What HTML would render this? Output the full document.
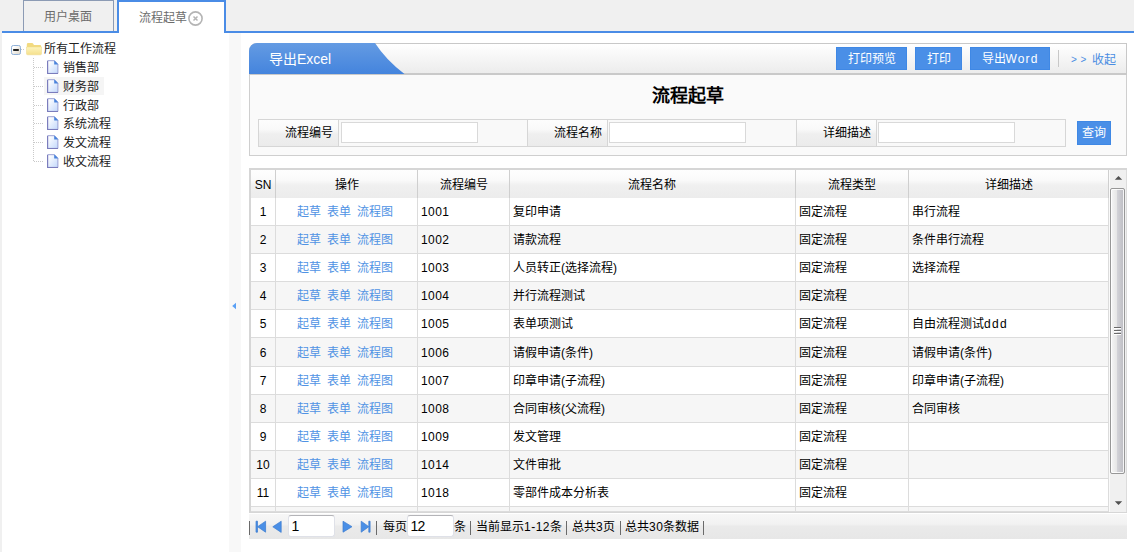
<!DOCTYPE html><html lang="zh-CN"><head><meta charset="utf-8"><title>流程起草</title><style>
*{box-sizing:border-box;margin:0;padding:0}
html,body{width:1134px;height:552px;overflow:hidden;background:#fff}
body{font-family:"Liberation Sans",sans-serif;font-size:12px;color:#000;position:relative}
.a{position:absolute}
input,button{font-family:inherit;color:inherit;outline:none;margin:0;-webkit-appearance:none;appearance:none;border-radius:0}
button{padding:0;cursor:pointer}
a{text-decoration:none;cursor:pointer}
.t{position:absolute;white-space:nowrap;line-height:16px;height:16px}
#tabbar{left:0;top:0;width:1134px;height:33px;background:#f0f0f0}
#blueline{left:2px;top:31px;width:1132px;height:2px;background:#4a8ce6}
#tab1{left:23px;top:0;width:91px;height:31px;border:1px solid #8c9bb4;border-bottom:none;background:#f0f0f0}
#tab2{left:117px;top:0;width:109px;height:33px;border:2px solid #4a8ce6;border-bottom:none;background:#fff}
#leftedge{left:0;top:33px;width:2px;height:519px;background:#f0f0f0}
#split{left:229px;top:33px;width:12px;height:519px;background:#f8f8f8}
.dotv{width:1px;background:repeating-linear-gradient(180deg,#c9c9c9 0 1px,transparent 1px 2px)}
.doth{height:1px;background:repeating-linear-gradient(90deg,#c9c9c9 0 1px,transparent 1px 2px)}
#hdr{left:249px;top:43px;width:878px;height:32px;border:1px solid #c8c8c8;border-bottom:2px solid #c9c9c9;border-radius:8px 0 0 0;background:linear-gradient(#ffffff,#ececec);overflow:hidden}
.btn{position:absolute;top:47px;height:23px;background:#4a8fe7;border:1px solid #3f88e5;color:#fff;text-align:center;line-height:22px;font-size:12px;white-space:nowrap}
#form{left:249px;top:75px;width:878px;height:81px;border:1px solid #cfcfcf;border-top:none;background:#fafafa}
.lab{position:absolute;z-index:2;top:119px;height:28px;width:81px;border:1px solid #d6d6d6;background:linear-gradient(#fdfdfd 0%,#f9f9f9 36%,#efefef 54%,#ebebeb 100%);text-align:right;padding-right:5px;line-height:26px;white-space:nowrap}
.inc{position:absolute;top:119px;height:28px;border:1px solid #d6d6d6;border-left:none;background:#f9f9f9}
.inp{position:absolute;top:122px;height:21px;width:137px;border:1px solid #d9d9d9;background:#fff;font-size:12px;padding:0 2px}
#grid{left:249px;top:169px;width:861px;height:343px;background:#fff;overflow:hidden}
.hc{position:absolute;top:170px;height:28px;background:linear-gradient(#fefefe 0%,#fafafa 36%,#f0f0f0 54%,#ececec 100%);border-right:1px solid #cfcfcf;text-align:center;line-height:30px;white-space:nowrap}
.c{position:absolute;border-right:1px solid #dcdcdc;border-bottom:1px solid #dcdcdc;white-space:nowrap;overflow:hidden;padding-left:3px}
.lk{color:#5093e4}
#pager{left:249px;top:514px;width:878px;height:25px;background:linear-gradient(#f7f7f7 0%,#f2f2f2 40%,#eaeaea 50%,#e7e7e7 100%)}
.pin{position:absolute;top:515px;height:22px;width:47px;border:1px solid #dfe1e8;border-top-color:#b4b4b8;border-radius:3px;background:#fff;font-size:14px;line-height:21px;padding-left:2.5px;letter-spacing:-0.9px}
</style></head><body>
<svg width="0" height="0" style="position:absolute"><defs><linearGradient id="dg" x1="0" y1="0" x2="1" y2="1"><stop offset="0.1" stop-color="#ffffff"/><stop offset="1" stop-color="#c2d8fb"/></linearGradient><linearGradient id="fg" x1="0" y1="0" x2="0" y2="1"><stop offset="0" stop-color="#fdf4be"/><stop offset="1" stop-color="#f5e08c"/></linearGradient><linearGradient id="eg" x1="0" y1="0" x2="1" y2="1"><stop offset="0.2" stop-color="#ffffff"/><stop offset="1" stop-color="#ddd6c8"/></linearGradient></defs></svg>
<div class="a" id="tabbar"></div><div class="a" id="blueline"></div>
<div class="a" id="tab1"></div><div class="a" id="tab2"></div>
<div class="t" style="left:44px;top:9px;color:#6c6c6c">用户桌面</div>
<div class="t" style="left:139px;top:10px;color:#6c6c6c">流程起草</div>
<svg class="a" style="left:187px;top:10px" width="17" height="17" viewBox="0 0 17 17"><circle cx="8.5" cy="8.5" r="6.6" fill="#fff" stroke="#b4b4b4" stroke-width="1.6"/><path d="M6.5 6.5 L10.5 10.5 M10.5 6.5 L6.5 10.5" stroke="#b4b4b4" stroke-width="1.5"/></svg>
<div class="a" id="leftedge"></div><div class="a" id="split"></div>
<svg class="a" style="left:231px;top:301px" width="7" height="10" viewBox="0 0 7 10"><path d="M1.2 5 L5 1.7 L5 8.3 Z" fill="#5aa0f5"/></svg>
<div class="a" style="left:44px;top:77px;width:60px;height:18px;background:#f5f5f5"></div>
<div class="a dotv" style="left:33px;top:58px;height:104px"></div>
<div class="a doth" style="left:21px;top:49px;width:4px"></div>
<svg class="a" style="left:11px;top:45px" width="10" height="10" viewBox="0 0 10 10"><rect x="0.5" y="0.5" width="9" height="9" rx="1.8" fill="url(#eg)" stroke="#8fb0d8"/><rect x="2.2" y="4" width="5.6" height="2" fill="#222"/></svg>
<svg class="a" style="left:26px;top:42px" width="16" height="14" viewBox="0 0 16 14"><path d="M0.8 2.4 Q0.8 1 2.2 1 L6 1 Q6.9 1 7.3 1.8 L7.9 3 L14 3 Q15.2 3 15.2 4.2 L15.2 6 L0.8 6 Z" fill="#f2da80"/><path d="M0.5 5 L15.5 5 L15.5 11.6 Q15.5 12.8 14.3 12.8 L1.7 12.8 Q0.5 12.8 0.5 11.6 Z" fill="url(#fg)" stroke="#eed987" stroke-width="0.5"/></svg>
<div class="t" style="left:44px;top:41px;color:#222">所有工作流程</div>
<div class="a doth" style="left:34px;top:67px;width:9px"></div>
<svg class="a" style="left:47px;top:60px" width="12" height="15" viewBox="0 0 12 15"><path d="M0.6 0.7 L7.4 0.7 L10.9 4.2 L10.9 13.4 L0.6 13.4 Z" fill="url(#dg)" stroke="#9aa0d4" stroke-width="1"/><path d="M0.6 1 L0.6 13.5 L11 13.5" fill="none" stroke="#7a7cbc" stroke-width="1.1"/><path d="M7.2 0.3 L11.3 4.4 L7.2 4.4 Z" fill="#4a84dc"/></svg>
<div class="t" style="left:63px;top:60px;color:#222">销售部</div>
<div class="a doth" style="left:34px;top:86px;width:9px"></div>
<svg class="a" style="left:47px;top:79px" width="12" height="15" viewBox="0 0 12 15"><path d="M0.6 0.7 L7.4 0.7 L10.9 4.2 L10.9 13.4 L0.6 13.4 Z" fill="url(#dg)" stroke="#9aa0d4" stroke-width="1"/><path d="M0.6 1 L0.6 13.5 L11 13.5" fill="none" stroke="#7a7cbc" stroke-width="1.1"/><path d="M7.2 0.3 L11.3 4.4 L7.2 4.4 Z" fill="#4a84dc"/></svg>
<div class="t" style="left:63px;top:79px;color:#222">财务部</div>
<div class="a doth" style="left:34px;top:105px;width:9px"></div>
<svg class="a" style="left:47px;top:98px" width="12" height="15" viewBox="0 0 12 15"><path d="M0.6 0.7 L7.4 0.7 L10.9 4.2 L10.9 13.4 L0.6 13.4 Z" fill="url(#dg)" stroke="#9aa0d4" stroke-width="1"/><path d="M0.6 1 L0.6 13.5 L11 13.5" fill="none" stroke="#7a7cbc" stroke-width="1.1"/><path d="M7.2 0.3 L11.3 4.4 L7.2 4.4 Z" fill="#4a84dc"/></svg>
<div class="t" style="left:63px;top:98px;color:#222">行政部</div>
<div class="a doth" style="left:34px;top:123px;width:9px"></div>
<svg class="a" style="left:47px;top:116px" width="12" height="15" viewBox="0 0 12 15"><path d="M0.6 0.7 L7.4 0.7 L10.9 4.2 L10.9 13.4 L0.6 13.4 Z" fill="url(#dg)" stroke="#9aa0d4" stroke-width="1"/><path d="M0.6 1 L0.6 13.5 L11 13.5" fill="none" stroke="#7a7cbc" stroke-width="1.1"/><path d="M7.2 0.3 L11.3 4.4 L7.2 4.4 Z" fill="#4a84dc"/></svg>
<div class="t" style="left:63px;top:116px;color:#222">系统流程</div>
<div class="a doth" style="left:34px;top:142px;width:9px"></div>
<svg class="a" style="left:47px;top:135px" width="12" height="15" viewBox="0 0 12 15"><path d="M0.6 0.7 L7.4 0.7 L10.9 4.2 L10.9 13.4 L0.6 13.4 Z" fill="url(#dg)" stroke="#9aa0d4" stroke-width="1"/><path d="M0.6 1 L0.6 13.5 L11 13.5" fill="none" stroke="#7a7cbc" stroke-width="1.1"/><path d="M7.2 0.3 L11.3 4.4 L7.2 4.4 Z" fill="#4a84dc"/></svg>
<div class="t" style="left:63px;top:135px;color:#222">发文流程</div>
<div class="a doth" style="left:34px;top:161px;width:9px"></div>
<svg class="a" style="left:47px;top:154px" width="12" height="15" viewBox="0 0 12 15"><path d="M0.6 0.7 L7.4 0.7 L10.9 4.2 L10.9 13.4 L0.6 13.4 Z" fill="url(#dg)" stroke="#9aa0d4" stroke-width="1"/><path d="M0.6 1 L0.6 13.5 L11 13.5" fill="none" stroke="#7a7cbc" stroke-width="1.1"/><path d="M7.2 0.3 L11.3 4.4 L7.2 4.4 Z" fill="#4a84dc"/></svg>
<div class="t" style="left:63px;top:154px;color:#222">收文流程</div>
<div class="a" id="hdr"></div><svg class="a" style="left:249px;top:43px" width="160" height="31" viewBox="0 0 160 31"><defs><linearGradient id="bg" x1="0" y1="0" x2="0" y2="1"><stop offset="0" stop-color="#649be3"/><stop offset="1" stop-color="#4484dd"/></linearGradient></defs><path d="M0 31 L0 8 A8 8 0 0 1 8 0 L126 0 Q137 17 155.5 31 Z" fill="url(#bg)"/></svg>
<div class="t" style="left:269px;top:50px;color:#fff;font-size:14px;line-height:18px;height:18px">导出Excel</div>
<button class="btn" style="left:836px;width:71px">打印预览</button>
<button class="btn" style="left:915px;width:47px">打印</button>
<button class="btn" style="left:970px;width:80px">导出<span style="letter-spacing:1.1px">Word</span></button>
<div class="a" style="left:1058px;top:50px;width:1px;height:17px;background:#c8c8c8"></div>
<div class="t" style="left:1071px;top:52px;color:#4a8de2;font-size:10px">&gt;</div><div class="t" style="left:1080.5px;top:52px;color:#4a8de2;font-size:10px">&gt;</div><div class="t" style="left:1092px;top:52px;color:#4a8de2">收起</div>
<div class="a" id="form"></div>
<div class="t" style="left:652px;top:84px;font-size:18px;font-weight:bold;line-height:24px;height:24px;color:#000">流程起草</div>
<div class="lab" style="left:258px">流程编号</div>
<div class="inc" style="left:339px;width:189px"></div>
<input class="inp" type="text" style="left:341px">
<div class="lab" style="left:527px">流程名称</div>
<div class="inc" style="left:608px;width:189px"></div>
<input class="inp" type="text" style="left:609px">
<div class="lab" style="left:796px">详细描述</div>
<div class="inc" style="left:877px;width:189px"></div>
<input class="inp" type="text" style="left:878px">
<button class="btn" style="left:1077px;top:121px;width:34px;height:24px;line-height:22px">查询</button>
<div class="a" style="left:249px;top:168px;width:878px;height:345px;background:#d6d6d6"></div>
<div class="a" style="left:251px;top:170px;width:858px;height:342px;background:#fff"></div>
<div class="hc" style="left:251px;width:25px">SN</div>
<div class="hc" style="left:276px;width:142px">操作</div>
<div class="hc" style="left:418px;width:92px">流程编号</div>
<div class="hc" style="left:510px;width:286px;padding-right:2px">流程名称</div>
<div class="hc" style="left:796px;width:113px">流程类型</div>
<div class="hc" style="left:909px;width:200px">详细描述</div>
<div class="c" style="left:251px;top:198px;width:25px;height:28px;line-height:29px;background:#fff;text-align:center;padding-left:0;">1</div>
<div class="c" style="left:276px;top:198px;width:142px;height:28px;line-height:29px;background:#fff;"><a class="lk a" style="left:21px">起草</a><a class="lk a" style="left:51px">表单</a><a class="lk a" style="left:81px">流程图</a></div>
<div class="c" style="left:418px;top:198px;width:92px;height:28px;line-height:29px;background:#fff;letter-spacing:0.4px;">1001</div>
<div class="c" style="left:510px;top:198px;width:286px;height:28px;line-height:29px;background:#fff;">复印申请</div>
<div class="c" style="left:796px;top:198px;width:113px;height:28px;line-height:29px;background:#fff;">固定流程</div>
<div class="c" style="left:909px;top:198px;width:200px;height:28px;line-height:29px;background:#fff;">串行流程</div>
<div class="c" style="left:251px;top:226px;width:25px;height:28px;line-height:29px;background:#f6f6f6;text-align:center;padding-left:0;">2</div>
<div class="c" style="left:276px;top:226px;width:142px;height:28px;line-height:29px;background:#f6f6f6;"><a class="lk a" style="left:21px">起草</a><a class="lk a" style="left:51px">表单</a><a class="lk a" style="left:81px">流程图</a></div>
<div class="c" style="left:418px;top:226px;width:92px;height:28px;line-height:29px;background:#f6f6f6;letter-spacing:0.4px;">1002</div>
<div class="c" style="left:510px;top:226px;width:286px;height:28px;line-height:29px;background:#f6f6f6;">请款流程</div>
<div class="c" style="left:796px;top:226px;width:113px;height:28px;line-height:29px;background:#f6f6f6;">固定流程</div>
<div class="c" style="left:909px;top:226px;width:200px;height:28px;line-height:29px;background:#f6f6f6;">条件串行流程</div>
<div class="c" style="left:251px;top:254px;width:25px;height:28px;line-height:29px;background:#fff;text-align:center;padding-left:0;">3</div>
<div class="c" style="left:276px;top:254px;width:142px;height:28px;line-height:29px;background:#fff;"><a class="lk a" style="left:21px">起草</a><a class="lk a" style="left:51px">表单</a><a class="lk a" style="left:81px">流程图</a></div>
<div class="c" style="left:418px;top:254px;width:92px;height:28px;line-height:29px;background:#fff;letter-spacing:0.4px;">1003</div>
<div class="c" style="left:510px;top:254px;width:286px;height:28px;line-height:29px;background:#fff;">人员转正(选择流程)</div>
<div class="c" style="left:796px;top:254px;width:113px;height:28px;line-height:29px;background:#fff;">固定流程</div>
<div class="c" style="left:909px;top:254px;width:200px;height:28px;line-height:29px;background:#fff;">选择流程</div>
<div class="c" style="left:251px;top:282px;width:25px;height:28px;line-height:29px;background:#f6f6f6;text-align:center;padding-left:0;">4</div>
<div class="c" style="left:276px;top:282px;width:142px;height:28px;line-height:29px;background:#f6f6f6;"><a class="lk a" style="left:21px">起草</a><a class="lk a" style="left:51px">表单</a><a class="lk a" style="left:81px">流程图</a></div>
<div class="c" style="left:418px;top:282px;width:92px;height:28px;line-height:29px;background:#f6f6f6;letter-spacing:0.4px;">1004</div>
<div class="c" style="left:510px;top:282px;width:286px;height:28px;line-height:29px;background:#f6f6f6;">并行流程测试</div>
<div class="c" style="left:796px;top:282px;width:113px;height:28px;line-height:29px;background:#f6f6f6;">固定流程</div>
<div class="c" style="left:909px;top:282px;width:200px;height:28px;line-height:29px;background:#f6f6f6;"></div>
<div class="c" style="left:251px;top:310px;width:25px;height:28px;line-height:29px;background:#fff;text-align:center;padding-left:0;">5</div>
<div class="c" style="left:276px;top:310px;width:142px;height:28px;line-height:29px;background:#fff;"><a class="lk a" style="left:21px">起草</a><a class="lk a" style="left:51px">表单</a><a class="lk a" style="left:81px">流程图</a></div>
<div class="c" style="left:418px;top:310px;width:92px;height:28px;line-height:29px;background:#fff;letter-spacing:0.4px;">1005</div>
<div class="c" style="left:510px;top:310px;width:286px;height:28px;line-height:29px;background:#fff;">表单项测试</div>
<div class="c" style="left:796px;top:310px;width:113px;height:28px;line-height:29px;background:#fff;">固定流程</div>
<div class="c" style="left:909px;top:310px;width:200px;height:28px;line-height:29px;background:#fff;">自由流程测试<span style="letter-spacing:1.3px">ddd</span></div>
<div class="c" style="left:251px;top:338px;width:25px;height:29px;line-height:30px;background:#f6f6f6;text-align:center;padding-left:0;">6</div>
<div class="c" style="left:276px;top:338px;width:142px;height:29px;line-height:30px;background:#f6f6f6;"><a class="lk a" style="left:21px">起草</a><a class="lk a" style="left:51px">表单</a><a class="lk a" style="left:81px">流程图</a></div>
<div class="c" style="left:418px;top:338px;width:92px;height:29px;line-height:30px;background:#f6f6f6;letter-spacing:0.4px;">1006</div>
<div class="c" style="left:510px;top:338px;width:286px;height:29px;line-height:30px;background:#f6f6f6;">请假申请(条件)</div>
<div class="c" style="left:796px;top:338px;width:113px;height:29px;line-height:30px;background:#f6f6f6;">固定流程</div>
<div class="c" style="left:909px;top:338px;width:200px;height:29px;line-height:30px;background:#f6f6f6;">请假申请(条件)</div>
<div class="c" style="left:251px;top:367px;width:25px;height:28px;line-height:29px;background:#fff;text-align:center;padding-left:0;">7</div>
<div class="c" style="left:276px;top:367px;width:142px;height:28px;line-height:29px;background:#fff;"><a class="lk a" style="left:21px">起草</a><a class="lk a" style="left:51px">表单</a><a class="lk a" style="left:81px">流程图</a></div>
<div class="c" style="left:418px;top:367px;width:92px;height:28px;line-height:29px;background:#fff;letter-spacing:0.4px;">1007</div>
<div class="c" style="left:510px;top:367px;width:286px;height:28px;line-height:29px;background:#fff;">印章申请(子流程)</div>
<div class="c" style="left:796px;top:367px;width:113px;height:28px;line-height:29px;background:#fff;">固定流程</div>
<div class="c" style="left:909px;top:367px;width:200px;height:28px;line-height:29px;background:#fff;">印章申请(子流程)</div>
<div class="c" style="left:251px;top:395px;width:25px;height:28px;line-height:29px;background:#f6f6f6;text-align:center;padding-left:0;">8</div>
<div class="c" style="left:276px;top:395px;width:142px;height:28px;line-height:29px;background:#f6f6f6;"><a class="lk a" style="left:21px">起草</a><a class="lk a" style="left:51px">表单</a><a class="lk a" style="left:81px">流程图</a></div>
<div class="c" style="left:418px;top:395px;width:92px;height:28px;line-height:29px;background:#f6f6f6;letter-spacing:0.4px;">1008</div>
<div class="c" style="left:510px;top:395px;width:286px;height:28px;line-height:29px;background:#f6f6f6;">合同审核(父流程)</div>
<div class="c" style="left:796px;top:395px;width:113px;height:28px;line-height:29px;background:#f6f6f6;">固定流程</div>
<div class="c" style="left:909px;top:395px;width:200px;height:28px;line-height:29px;background:#f6f6f6;">合同审核</div>
<div class="c" style="left:251px;top:423px;width:25px;height:28px;line-height:29px;background:#fff;text-align:center;padding-left:0;">9</div>
<div class="c" style="left:276px;top:423px;width:142px;height:28px;line-height:29px;background:#fff;"><a class="lk a" style="left:21px">起草</a><a class="lk a" style="left:51px">表单</a><a class="lk a" style="left:81px">流程图</a></div>
<div class="c" style="left:418px;top:423px;width:92px;height:28px;line-height:29px;background:#fff;letter-spacing:0.4px;">1009</div>
<div class="c" style="left:510px;top:423px;width:286px;height:28px;line-height:29px;background:#fff;">发文管理</div>
<div class="c" style="left:796px;top:423px;width:113px;height:28px;line-height:29px;background:#fff;">固定流程</div>
<div class="c" style="left:909px;top:423px;width:200px;height:28px;line-height:29px;background:#fff;"></div>
<div class="c" style="left:251px;top:451px;width:25px;height:28px;line-height:29px;background:#f6f6f6;text-align:center;padding-left:0;">10</div>
<div class="c" style="left:276px;top:451px;width:142px;height:28px;line-height:29px;background:#f6f6f6;"><a class="lk a" style="left:21px">起草</a><a class="lk a" style="left:51px">表单</a><a class="lk a" style="left:81px">流程图</a></div>
<div class="c" style="left:418px;top:451px;width:92px;height:28px;line-height:29px;background:#f6f6f6;letter-spacing:0.4px;">1014</div>
<div class="c" style="left:510px;top:451px;width:286px;height:28px;line-height:29px;background:#f6f6f6;">文件审批</div>
<div class="c" style="left:796px;top:451px;width:113px;height:28px;line-height:29px;background:#f6f6f6;">固定流程</div>
<div class="c" style="left:909px;top:451px;width:200px;height:28px;line-height:29px;background:#f6f6f6;"></div>
<div class="c" style="left:251px;top:479px;width:25px;height:28px;line-height:29px;background:#fff;text-align:center;padding-left:0;">11</div>
<div class="c" style="left:276px;top:479px;width:142px;height:28px;line-height:29px;background:#fff;"><a class="lk a" style="left:21px">起草</a><a class="lk a" style="left:51px">表单</a><a class="lk a" style="left:81px">流程图</a></div>
<div class="c" style="left:418px;top:479px;width:92px;height:28px;line-height:29px;background:#fff;letter-spacing:0.4px;">1018</div>
<div class="c" style="left:510px;top:479px;width:286px;height:28px;line-height:29px;background:#fff;">零部件成本分析表</div>
<div class="c" style="left:796px;top:479px;width:113px;height:28px;line-height:29px;background:#fff;">固定流程</div>
<div class="c" style="left:909px;top:479px;width:200px;height:28px;line-height:29px;background:#fff;"></div>
<div class="c" style="left:251px;top:507px;width:25px;height:5px;line-height:6px;background:#f6f6f6;text-align:center;padding-left:0;"></div>
<div class="c" style="left:276px;top:507px;width:142px;height:5px;line-height:6px;background:#f6f6f6;"></div>
<div class="c" style="left:418px;top:507px;width:92px;height:5px;line-height:6px;background:#f6f6f6;letter-spacing:0.4px;"></div>
<div class="c" style="left:510px;top:507px;width:286px;height:5px;line-height:6px;background:#f6f6f6;"></div>
<div class="c" style="left:796px;top:507px;width:113px;height:5px;line-height:6px;background:#f6f6f6;"></div>
<div class="c" style="left:909px;top:507px;width:200px;height:5px;line-height:6px;background:#f6f6f6;"></div>
<div class="a" style="left:1109px;top:170px;width:18px;height:342px;background:#f0f0f0;border-left:1px solid #fafafa;border-right:1px solid #dcdcdc"></div>
<div class="a" style="left:1110px;top:188px;width:15px;height:286px;border:1px solid #979797;border-radius:2px;box-shadow:inset 0 0 0 1px rgba(255,255,255,0.85);background:linear-gradient(90deg,#f6f6f6 0%,#e6e6e6 46%,#d3d3d8 47%,#bcbcc2 100%)"></div>
<svg class="a" style="left:1114px;top:175px" width="9" height="6" viewBox="0 0 9 6"><path d="M0.8 4.8 L4.5 1 L8.2 4.8 Z" fill="#505050"/></svg>
<svg class="a" style="left:1114px;top:500px" width="9" height="6" viewBox="0 0 9 6"><path d="M0.8 1.2 L4.5 5 L8.2 1.2 Z" fill="#505050"/></svg>
<div class="a" style="left:1114px;top:327px;width:7px;height:2px;background:#6a6a6a;border-bottom:1px solid #fff"></div>
<div class="a" style="left:1114px;top:330px;width:7px;height:2px;background:#6a6a6a;border-bottom:1px solid #fff"></div>
<div class="a" style="left:1114px;top:333px;width:7px;height:2px;background:#6a6a6a;border-bottom:1px solid #fff"></div>
<div class="a" id="pager"></div>
<div class="a" style="left:249px;top:521px;width:1px;height:14px;background:#6a6a6a"></div>
<div class="a" style="left:376px;top:521px;width:1px;height:14px;background:#6a6a6a"></div>
<div class="a" style="left:470px;top:521px;width:1px;height:14px;background:#6a6a6a"></div>
<div class="a" style="left:566px;top:521px;width:1px;height:14px;background:#6a6a6a"></div>
<div class="a" style="left:620px;top:521px;width:1px;height:14px;background:#6a6a6a"></div>
<div class="a" style="left:703px;top:521px;width:1px;height:14px;background:#6a6a6a"></div>
<svg class="a" style="left:250px;top:516px" width="130" height="22" viewBox="250 516 130 22"><g fill="#4a8fe6" stroke="#3b7bd0" stroke-width="0.7" stroke-linejoin="round"><rect x="256" y="521.2" width="1.5" height="11"/><path d="M265.6 521.2 L265.6 532.2 L257.6 526.7 Z"/><path d="M281.2 521.2 L281.2 532.4 L272.8 526.8 Z"/><path d="M343 521.2 L343 532.2 L352 526.7 Z"/><path d="M361.2 521.2 L361.2 532.2 L368.8 526.7 Z"/><rect x="368.8" y="521.2" width="1.3" height="11"/></g></svg>
<input class="pin" type="text" value="1" style="left:288px">
<input class="pin" type="text" value="12" style="left:407px">
<div class="t" style="left:383px;top:519px">每页</div>
<div class="t" style="left:454px;top:519px">条</div>
<div class="t" style="left:476px;top:519px">当前显示<span style="letter-spacing:0.5px">1-12</span>条</div>
<div class="t" style="left:572px;top:519px">总共<span style="letter-spacing:0.6px">3</span>页</div>
<div class="t" style="left:625px;top:519px">总共<span style="letter-spacing:0.5px">30</span>条数据</div>
</body></html>
